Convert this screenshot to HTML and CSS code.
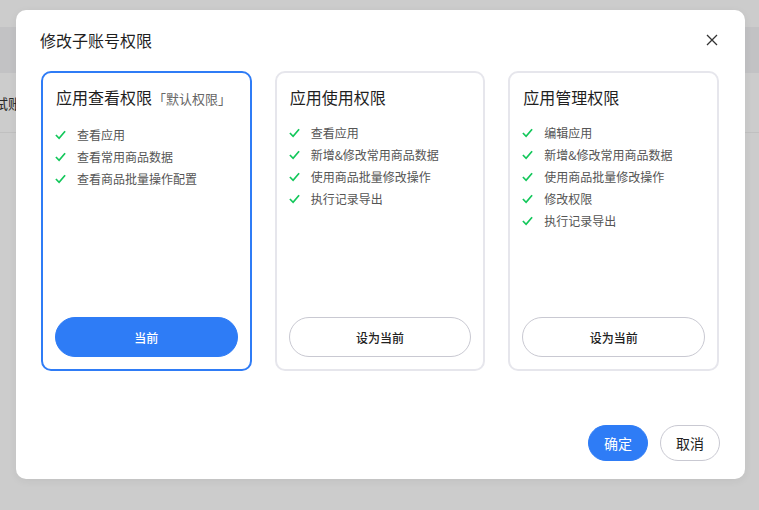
FILE: index.html
```html
<!DOCTYPE html>
<html lang="zh-CN">
<head>
<meta charset="utf-8">
<title>修改子账号权限</title>
<link rel="stylesheet" href="styles.css">
</head>
<body>
<div class="page">
  <div class="page-top"></div>
  <div class="page-head"></div>
  <div class="page-row"><span class="row-text">测试账号名称</span></div>
</div>
<div class="mask"></div>
<div class="modal">
  <div class="modal-head">
    <span class="modal-title">修改子账号权限</span>
    <svg class="close" width="12" height="12" viewBox="0 0 12 12"><path d="M1 1L11 11M11 1L1 11" stroke="#333" stroke-width="1.3" fill="none"/></svg>
  </div>
  <div class="cards">
    <div class="card active">
      <div class="card-title">应用查看权限<span class="tag">「默认权限」</span></div>
      <ul class="list">
        <li><svg class="ck" viewBox="0 0 11 10"><path d="M0.9 5L4.1 8.3L10.1 1.2" /></svg>查看应用</li>
        <li><svg class="ck" viewBox="0 0 11 10"><path d="M0.9 5L4.1 8.3L10.1 1.2" /></svg>查看常用商品数据</li>
        <li><svg class="ck" viewBox="0 0 11 10"><path d="M0.9 5L4.1 8.3L10.1 1.2" /></svg>查看商品批量操作配置</li>
      </ul>
      <button class="btn btn-primary card-btn">当前</button>
    </div>
    <div class="card">
      <div class="card-title">应用使用权限</div>
      <ul class="list">
        <li><svg class="ck" viewBox="0 0 11 10"><path d="M0.9 5L4.1 8.3L10.1 1.2" /></svg>查看应用</li>
        <li><svg class="ck" viewBox="0 0 11 10"><path d="M0.9 5L4.1 8.3L10.1 1.2" /></svg>新增&amp;修改常用商品数据</li>
        <li><svg class="ck" viewBox="0 0 11 10"><path d="M0.9 5L4.1 8.3L10.1 1.2" /></svg>使用商品批量修改操作</li>
        <li><svg class="ck" viewBox="0 0 11 10"><path d="M0.9 5L4.1 8.3L10.1 1.2" /></svg>执行记录导出</li>
      </ul>
      <button class="btn btn-default card-btn">设为当前</button>
    </div>
    <div class="card">
      <div class="card-title">应用管理权限</div>
      <ul class="list">
        <li><svg class="ck" viewBox="0 0 11 10"><path d="M0.9 5L4.1 8.3L10.1 1.2" /></svg>编辑应用</li>
        <li><svg class="ck" viewBox="0 0 11 10"><path d="M0.9 5L4.1 8.3L10.1 1.2" /></svg>新增&amp;修改常用商品数据</li>
        <li><svg class="ck" viewBox="0 0 11 10"><path d="M0.9 5L4.1 8.3L10.1 1.2" /></svg>使用商品批量修改操作</li>
        <li><svg class="ck" viewBox="0 0 11 10"><path d="M0.9 5L4.1 8.3L10.1 1.2" /></svg>修改权限</li>
        <li><svg class="ck" viewBox="0 0 11 10"><path d="M0.9 5L4.1 8.3L10.1 1.2" /></svg>执行记录导出</li>
      </ul>
      <button class="btn btn-default card-btn">设为当前</button>
    </div>
  </div>
  <div class="modal-foot">
    <button class="btn btn-primary foot-btn">确定</button>
    <button class="btn btn-default foot-btn">取消</button>
  </div>
</div>
</body>
</html>
```

FILE: styles.css
```css
* { box-sizing: border-box; }
html, body { margin: 0; padding: 0; }
body {
  width: 759px;
  height: 510px;
  overflow: hidden;
  background: #ffffff;
  font-family: "Noto Sans CJK SC", "Noto Sans", sans-serif;
  color: #222;
  position: relative;
}
.page { width: 100%; }
.page-top { height: 27px; background: #fff; }
.page-head { height: 46px; background: #f3f3f6; }
.page-row {
  height: 60px;
  border-bottom: 1px solid #f0f0f0;
  display: flex;
  align-items: center;
  overflow: hidden;
}
.row-text {
  margin-left: -20px;
  font-size: 14px;
  color: #333;
  white-space: nowrap;
}
.mask {
  position: absolute;
  inset: 0;
  background: rgba(0, 0, 0, 0.2);
}
.modal {
  position: absolute;
  left: 16px;
  top: 10px;
  width: 729px;
  height: 469px;
  background: #fff;
  border-radius: 10px;
  padding: 18px 26px 18px 25px;
  display: flex;
  flex-direction: column;
  box-shadow: 0 2px 8px rgba(0,0,0,0.06);
}
.modal-head {
  display: flex;
  align-items: center;
  justify-content: space-between;
  height: 24px;
}
.modal-title {
  font-size: 16px;
  line-height: 24px;
  color: #1f1f1f;
  margin-left: -1px;
}
.close { display: block; margin-right: 1px; }
.cards {
  margin-top: 19px;
  display: grid;
  grid-template-columns: repeat(3, minmax(0, 1fr));
  gap: 23px;
}
.card {
  height: 300px;
  border: 2px solid #e6e6ec;
  border-radius: 10px;
  padding: 12px;
  display: flex;
  flex-direction: column;
}
.card.active { border-color: #2f7cf6; }
.card-title {
  font-size: 16px;
  line-height: 24px;
  color: #1f1f1f;
  white-space: nowrap;
  padding-left: 1px;
}
.tag {
  font-size: 13px;
  color: #666;
  margin-left: 1px;
}
.list {
  list-style: none;
  margin: 13px 0 0;
  padding: 0;
}
.list li {
  display: flex;
  align-items: center;
  font-size: 12px;
  line-height: 22px;
  color: #555;
  white-space: nowrap;
}
.ck {
  width: 11px;
  height: 10px;
  margin-right: 11px;
  fill: none;
  stroke: #12c75a;
  stroke-width: 1.7;
}
.btn {
  font-family: inherit;
  border-radius: 999px;
  cursor: pointer;
  padding: 0;
}
.btn-primary {
  background: #2e7cf6;
  border: 1px solid #2e7cf6;
  color: #fff;
}
.btn-default {
  background: #fff;
  border: 1px solid #c9c9d2;
  color: #222;
}
.card-btn {
  margin-top: auto;
  height: 40px;
  width: 100%;
  font-size: 12px;
  font-weight: 500;
}
.modal-foot {
  margin-top: auto;
  display: flex;
  justify-content: flex-end;
  gap: 12px;
  margin-right: -1px;
}
.foot-btn {
  width: 60px;
  height: 36px;
  font-size: 14px;
}
```
